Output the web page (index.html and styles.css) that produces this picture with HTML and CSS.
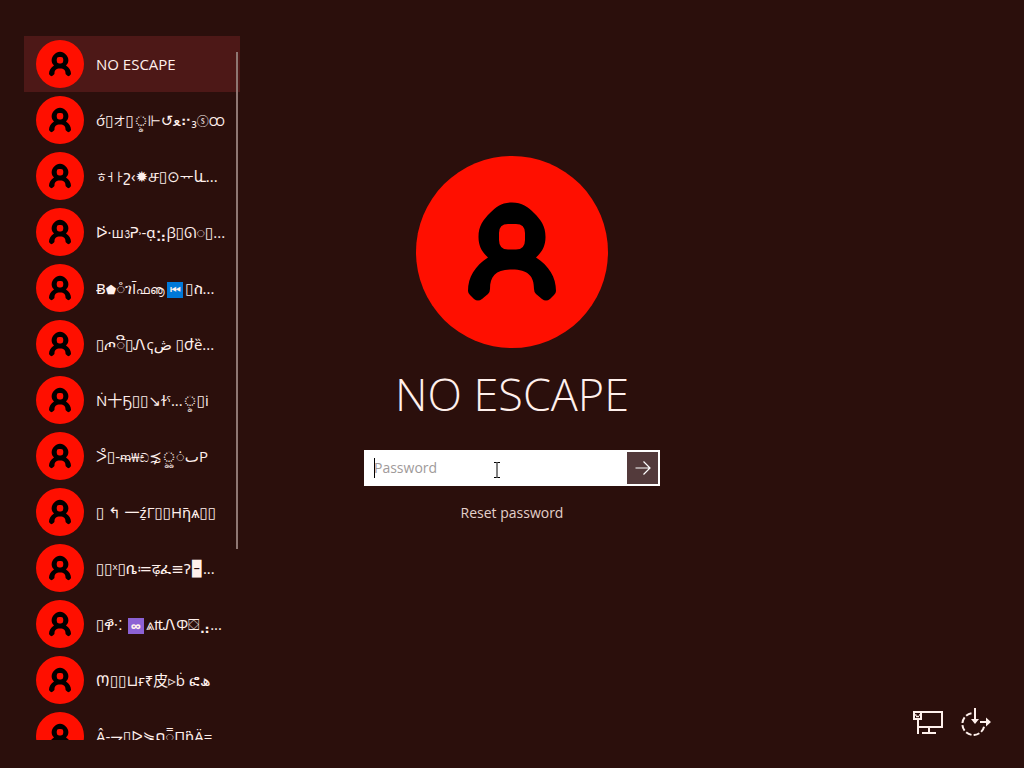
FILE: index.html
```html
<!DOCTYPE html>
<html lang="en">
<head>
<meta charset="utf-8">
<meta name="viewport" content="width=device-width, initial-scale=1">
<title>Sign in</title>
<link rel="stylesheet" href="styles.css">
</head>
<body>
<svg class="defs" aria-hidden="true">
  <symbol id="user" viewBox="0 0 192 192">
    <circle cx="96" cy="96" r="96" fill="#ff0f00"/>
    <path fill="#000" fill-rule="evenodd" d="M96 46.500C106 46.500 112 51 118 57C125 64 129.500 70 129.500 81C129.500 90 126 96 120 101.500C133 110 140 121 140 135Q140 137 138 139L134 143Q130 146 126 143L120 138Q118 136 118 133C118 120 112 113.500 96 113.500C80 113.500 74 120 74 133Q74 136 72 138L66 143Q62 146 58 143L54 139Q52 137 52 135C52 121 59 110 72 101.500C66 96 62.500 90 62.500 81C62.500 70 67 64 74 57C80 51 86 46.500 96 46.500ZM92 68Q83 68 83 77V84Q83 93.500 92 93.500H100Q109 93.500 109 84V77Q109 68 100 68Z"/>
  </symbol>
</svg>
<div class="screen">
  <nav class="users" aria-label="Accounts">
    <div class="list">
      <button class="user selected"><svg class="face"><use href="#user"/></svg><span class="name">NO ESCAPE</span></button>
      <button class="user"><svg class="face"><use href="#user"/></svg><span class="name">σ́▯<small>オ</small>▯ৢ⊩↺ﻌ⠖₃<small>ⓢ</small><small>Ꝏ</small></span></button>
      <button class="user"><svg class="face"><use href="#user"/></svg><span class="name"><small>ㅎ</small>˧ ꜔շ‹✹<big>ச</big>▯⊙ᅲև...</span></button>
      <button class="user"><svg class="face"><use href="#user"/></svg><span class="name">ᐅ̇·ꟺ᭠ᕈ˒-ɑ̣⣢β▯ᘏ◌▯...</span></button>
      <button class="user"><svg class="face"><use href="#user"/></svg><span class="name">Ƀ<small>⬟</small>◌̊ገĪ<small>ഫൡ</small><span class="emoji blue">⏮</span>▯ስ...</span></button>
      <button class="user"><svg class="face"><use href="#user"/></svg><span class="name">▯ጦ◌ີ▯Ꮑҁڞ ▯ժȅ...</span></button>
      <button class="user"><svg class="face"><use href="#user"/></svg><span class="name">Ṅ十Ҕ▯▯↘ɫˤ...ৢ▯i̇</span></button>
      <button class="user"><svg class="face"><use href="#user"/></svg><span class="name">ᐳ̊▯-<small>ᵯ₩ඬ</small>⋨ৣ◌̇ٮP</span></button>
      <button class="user"><svg class="face"><use href="#user"/></svg><span class="name">▯ ↰ 一ź̠Γ▯▯Hῆѧ▯▯</span></button>
      <button class="user"><svg class="face"><use href="#user"/></svg><span class="name">▯▯ˣ▯ቤ≔ढ़ፈ≡Ɂ🁢...</span></button>
      <button class="user"><svg class="face"><use href="#user"/></svg><span class="name">▯ዋ҄⁖ <span class="emoji violet">∞</span>⩓₶ᏁФ⛋⣠...</span></button>
      <button class="user"><svg class="face"><use href="#user"/></svg><span class="name">Ო▯▯⊔ғ₹皮▹ḃ ፎھ</span></button>
      <button class="user"><svg class="face"><use href="#user"/></svg><span class="name">Â-⇁▯ᐅ⋟ດ◌̿ПἣÄ=</span></button>
    </div>
    <span class="scroll"></span>
  </nav>
  <main class="signin">
    <svg class="portrait"><use href="#user"/></svg>
    <h1 class="title">NO ESCAPE</h1>
    <form class="form">
      <input class="field" type="password" placeholder="Password" aria-label="Password">
      <span class="caret"></span>
      <svg class="pointer" viewBox="0 0 8 16"><path d="M1 .5H3.500L4 1L4.500.5H7M4 1V15M1 15.500H3.500L4 15L4.500 15.500H7" fill="none" stroke="#000"/></svg>
      <button class="submit" type="button" aria-label="Submit"><svg class="arrow" viewBox="0 0 16 16"><path d="M.5 8H15M8.500 1.500L15 8L8.500 14.500" fill="none" stroke="#fff" stroke-width="1.200"/></svg></button>
    </form>
    <a class="reset" href="#">Reset password</a>
  </main>
  <div class="tools">
    <button class="tool" aria-label="Network"><svg viewBox="0 0 32 28"><g fill="none" stroke="#fff0ec" stroke-width="2"><path d="M9 4H30V19H6M6 12V26M17 19V25M10 25H24M2 4H9V11H2Z"/><path d="M3 7H4.500M7 7H8.500M4 8.500H7" stroke-width="1.300"/></g></svg></button>
    <button class="tool" aria-label="Power"><svg viewBox="0 0 32 28"><path d="M11.500 5.200A11 11 0 1 0 24.200 18" fill="none" stroke="#fff0ec" stroke-width="2" stroke-dasharray="6 2.200"/><path d="M15 0V11M20 14H27" stroke="#fff0ec" stroke-width="2"/><path d="M11 11H19L15 16ZM26 9.500L31 14L26 18.500Z" fill="#fff0ec"/></svg></button>
  </div>
</div>
</body>
</html>
```
FILE: styles.css
```css
* { box-sizing: border-box; }
body {
  margin: 0;
  background: #2b0f0c;
  color: #fff0ec;
  font: 15px/20px "Open Sans", "Noto Sans", "DejaVu Sans", "Noto Sans CJK SC", sans-serif;
}
button { padding: 0; border: 0; background: none; color: inherit; font: inherit; }
.defs { position: absolute; width: 0; height: 0; }
.screen {
  display: grid;
  grid-template-columns: 240px minmax(300px, 1fr) 240px;
  height: 100vh;
  overflow: hidden;
}
.users { position: relative; padding: 36px 0 28px 24px; min-height: 0; }
.list { height: 100%; overflow: hidden; }
.user {
  display: flex;
  align-items: center;
  gap: 12px;
  width: 100%;
  height: 56px;
  padding-left: 12px;
  text-align: left;
}
.selected { background: #4d1817; }
.face { flex: none; width: 48px; height: 48px; }
.name { flex: 1; overflow: hidden; white-space: nowrap; height: 24px; line-height: 24px; }
.name small { font-size: 12px; }
.name big { font-size: 20px; line-height: 20px; }
.emoji { display: inline-block; height: 16px; width: 16px; margin: 0 2px; font-size: 12px; line-height: 16px; text-align: center; vertical-align: middle; }
.blue { background: #0078d7; }
.violet { background: #8c62d4; font-weight: 700; font-size: 15px; }
.scroll { position: absolute; top: 52px; right: 2px; width: 2px; height: 497px; background: #8f7773; }
.signin { display: flex; flex-direction: column; align-items: center; padding-top: 156px; }
.portrait { flex: none; width: 192px; height: 192px; }
.title { margin: 14px 0 24px; font-size: 45px; line-height: 64px; font-weight: 300; white-space: nowrap; }
.form { position: relative; display: flex; width: 296px; height: 36px; padding: 2px; background: #fff; }
.field { flex: 1; min-width: 0; padding: 0 8px; border: 0; outline: 0; background: #fff; color: #000; font: inherit; font-size: 14px; }
.field::placeholder { color: #a09a9a; opacity: 1; }
.caret { position: absolute; left: 10px; top: 8px; width: 1px; height: 20px; background: #000; }
.pointer { position: absolute; left: 129px; top: 12px; width: 8px; height: 16px; }
.submit { display: grid; place-items: center; width: 31px; background: #533a3b; }
.arrow { width: 16px; height: 16px; }
.reset { margin-top: 17px; color: #e3cfca; font-size: 14px; text-decoration: none; }
.tools { display: flex; align-items: flex-end; justify-content: flex-end; gap: 16px; padding: 0 32px 32px 0; }
.tool, .tool svg { display: block; width: 32px; height: 28px; }
```
